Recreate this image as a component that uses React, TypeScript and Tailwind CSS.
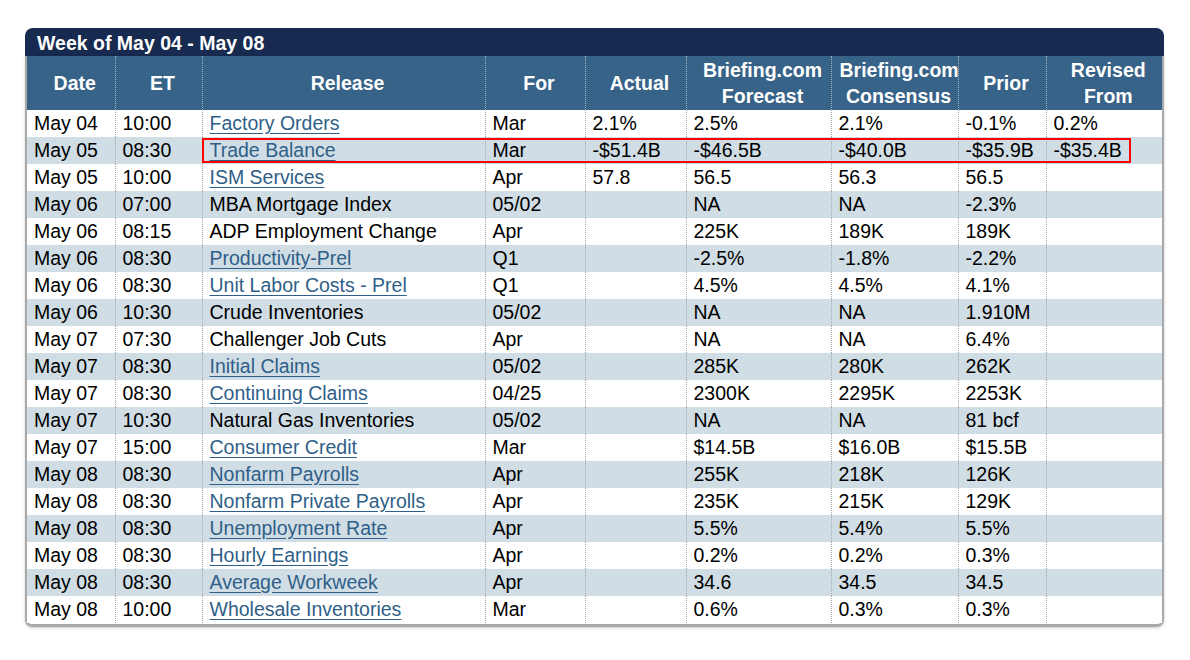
type Row = {
  date: string
  et: string
  release: string
  link: boolean
  period: string
  actual: string
  forecast: string
  consensus: string
  prior: string
  revised: string
}

const rows: Row[] = [
  { date: 'May 04', et: '10:00', release: 'Factory Orders', link: true, period: 'Mar', actual: '2.1%', forecast: '2.5%', consensus: '2.1%', prior: '-0.1%', revised: '0.2%' },
  { date: 'May 05', et: '08:30', release: 'Trade Balance', link: true, period: 'Mar', actual: '-$51.4B', forecast: '-$46.5B', consensus: '-$40.0B', prior: '-$35.9B', revised: '-$35.4B' },
  { date: 'May 05', et: '10:00', release: 'ISM Services', link: true, period: 'Apr', actual: '57.8', forecast: '56.5', consensus: '56.3', prior: '56.5', revised: '' },
  { date: 'May 06', et: '07:00', release: 'MBA Mortgage Index', link: false, period: '05/02', actual: '', forecast: 'NA', consensus: 'NA', prior: '-2.3%', revised: '' },
  { date: 'May 06', et: '08:15', release: 'ADP Employment Change', link: false, period: 'Apr', actual: '', forecast: '225K', consensus: '189K', prior: '189K', revised: '' },
  { date: 'May 06', et: '08:30', release: 'Productivity-Prel', link: true, period: 'Q1', actual: '', forecast: '-2.5%', consensus: '-1.8%', prior: '-2.2%', revised: '' },
  { date: 'May 06', et: '08:30', release: 'Unit Labor Costs - Prel', link: true, period: 'Q1', actual: '', forecast: '4.5%', consensus: '4.5%', prior: '4.1%', revised: '' },
  { date: 'May 06', et: '10:30', release: 'Crude Inventories', link: false, period: '05/02', actual: '', forecast: 'NA', consensus: 'NA', prior: '1.910M', revised: '' },
  { date: 'May 07', et: '07:30', release: 'Challenger Job Cuts', link: false, period: 'Apr', actual: '', forecast: 'NA', consensus: 'NA', prior: '6.4%', revised: '' },
  { date: 'May 07', et: '08:30', release: 'Initial Claims', link: true, period: '05/02', actual: '', forecast: '285K', consensus: '280K', prior: '262K', revised: '' },
  { date: 'May 07', et: '08:30', release: 'Continuing Claims', link: true, period: '04/25', actual: '', forecast: '2300K', consensus: '2295K', prior: '2253K', revised: '' },
  { date: 'May 07', et: '10:30', release: 'Natural Gas Inventories', link: false, period: '05/02', actual: '', forecast: 'NA', consensus: 'NA', prior: '81 bcf', revised: '' },
  { date: 'May 07', et: '15:00', release: 'Consumer Credit', link: true, period: 'Mar', actual: '', forecast: '$14.5B', consensus: '$16.0B', prior: '$15.5B', revised: '' },
  { date: 'May 08', et: '08:30', release: 'Nonfarm Payrolls', link: true, period: 'Apr', actual: '', forecast: '255K', consensus: '218K', prior: '126K', revised: '' },
  { date: 'May 08', et: '08:30', release: 'Nonfarm Private Payrolls', link: true, period: 'Apr', actual: '', forecast: '235K', consensus: '215K', prior: '129K', revised: '' },
  { date: 'May 08', et: '08:30', release: 'Unemployment Rate', link: true, period: 'Apr', actual: '', forecast: '5.5%', consensus: '5.4%', prior: '5.5%', revised: '' },
  { date: 'May 08', et: '08:30', release: 'Hourly Earnings', link: true, period: 'Apr', actual: '', forecast: '0.2%', consensus: '0.2%', prior: '0.3%', revised: '' },
  { date: 'May 08', et: '08:30', release: 'Average Workweek', link: true, period: 'Apr', actual: '', forecast: '34.6', consensus: '34.5', prior: '34.5', revised: '' },
  { date: 'May 08', et: '10:00', release: 'Wholesale Inventories', link: true, period: 'Mar', actual: '', forecast: '0.6%', consensus: '0.3%', prior: '0.3%', revised: '' },
]

const widths = ['w-[88px]', 'w-[87px]', 'w-[283px]', 'w-[100px]', 'w-[101px]', 'w-[145px]', 'w-[127px]', 'w-[88px]', 'w-[116px]']

const th = 'p-0 pl-[8px] font-bold text-white text-center leading-[26px] border-r border-dotted border-[#9fb3c4] last:border-r-0'
const td = 'h-[27px] p-0 pl-[7px] leading-[27px] text-left whitespace-nowrap border-r border-dotted border-[#a8a8a8] last:border-r-0'

export default function App() {
  return (
    <div className="w-[1190px] h-[660px] bg-white pt-[28px] pl-[25px] font-['Liberation_Sans',Arial,sans-serif] text-[19.5px] leading-[27px] text-black">
      <div className="w-[1139px]">
        <div className="h-[28px] bg-[#172a4f] rounded-t-[8px] pl-[12px] text-white font-bold leading-[30px]">
          Week of May 04 - May 08
        </div>
        <div className="relative border-x-2 border-b-[3px] border-[#a9a9a9] rounded-b-[7px] pb-[1px] shadow-[0_1px_3px_rgba(0,0,0,0.2)]">
          <table className="w-full table-fixed border-collapse">
            <colgroup>
              {widths.map((w, i) => (
                <col key={i} className={w} />
              ))}
            </colgroup>
            <thead>
              <tr className="h-[54px] bg-[#376388]">
                <th className={th}>Date</th>
                <th className={th}>ET</th>
                <th className={th}>Release</th>
                <th className={th}>For</th>
                <th className={th}>Actual</th>
                <th className={th}>Briefing.com<br />Forecast</th>
                <th className={th}>Briefing.com<br />Consensus</th>
                <th className={th}>Prior</th>
                <th className={th}>Revised<br />From</th>
              </tr>
            </thead>
            <tbody>
              {rows.map((r, i) => (
                <tr key={i} className={i % 2 === 1 ? 'bg-[#d0dde5]' : 'bg-white'}>
                  <td className={td}>{r.date}</td>
                  <td className={td}>{r.et}</td>
                  <td className={td}>
                    {r.link ? (
                      <a href="#" className="text-[#2f5f88] underline underline-offset-[3px]">
                        {r.release}
                      </a>
                    ) : (
                      r.release
                    )}
                  </td>
                  <td className={td}>{r.period}</td>
                  <td className={td}>{r.actual}</td>
                  <td className={td}>{r.forecast}</td>
                  <td className={td}>{r.consensus}</td>
                  <td className={td}>{r.prior}</td>
                  <td className={td}>{r.revised}</td>
                </tr>
              ))}
            </tbody>
          </table>
          <div className="absolute left-[175px] top-[82px] w-[929px] h-[25px] border-2 border-[#ff0000] pointer-events-none" />
        </div>
      </div>
    </div>
  )
}
